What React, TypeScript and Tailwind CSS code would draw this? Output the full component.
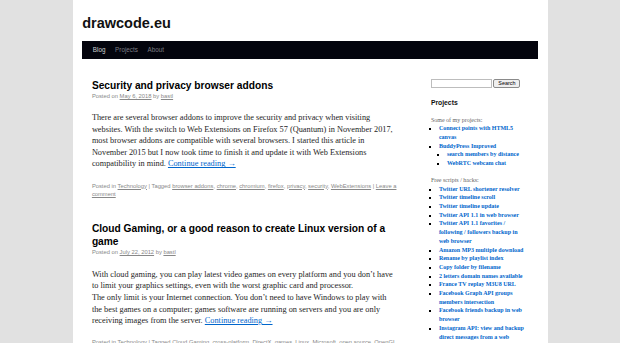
import React from "react";

const SANS = { fontFamily: "'Liberation Sans', Arial, sans-serif" };
const SERIF = { fontFamily: "'Liberation Serif', 'Times New Roman', serif" };

const NAV = [
  { label: "Blog", current: true },
  { label: "Projects", current: false },
  { label: "About", current: false },
];

interface Post {
  title: string;
  date: string;
  lines: string[];
  category: string;
  tags: string[];
  comment?: boolean;
}

// line breaks follow the original layout (Georgia in the source, narrower Times here)
const POSTS: Post[] = [
  {
    title: "Security and privacy browser addons",
    date: "May 6, 2018",
    lines: [
      "There are several browser addons to improve the security and privacy when visiting",
      "websites. With the switch to Web Extensions on Firefox 57 (Quantum) in November 2017,",
      "most browser addons are compatible with several browsers. I started this article in",
      "November 2015 but I now took time to finish it and update it with Web Extensions",
      "compatibility in mind.",
    ],
    category: "Technology",
    tags: ["browser addons", "chrome", "chromium", "firefox", "privacy", "security", "WebExtensions"],
    comment: true,
  },
  {
    title: "Cloud Gaming, or a good reason to create Linux version of a game",
    date: "July 22, 2012",
    lines: [
      "With cloud gaming, you can play latest video games on every platform and you don’t have",
      "to limit your graphics settings, even with the worst graphic card and processor.",
      "The only limit is your Internet connection. You don’t need to have Windows to play with",
      "the best games on a computer; games software are running on servers and you are only",
      "receiving images from the server.",
    ],
    category: "Technology",
    tags: ["Cloud Gaming", "cross-platform", "DirectX", "games", "Linux", "Microsoft", "open source", "OpenGL"],
  },
];

const PROJECTS = [
  { label: "Connect points with HTML5 canvas" },
  { label: "BuddyPress Improved", children: ["search members by distance", "WebRTC webcam chat"] },
];

const HACKS = [
  "Twitter URL shortener resolver",
  "Twitter timeline scroll",
  "Twitter timeline update",
  "Twitter API 1.1 in web browser",
  "Twitter API 1.1 favorites / following / followers backup in web browser",
  "Amazon MP3 multiple download",
  "Rename by playlist index",
  "Copy folder by filename",
  "2 letters domain names available",
  "France TV replay M3U8 URL",
  "Facebook Graph API groups members intersection",
  "Facebook friends backup in web browser",
  "Instagram API: view and backup direct messages from a web browser",
];

function PostEntry({ post }: { post: Post }) {
  return (
    <div className="mb-[23px]">
      <h2 className="text-[10.2px] leading-[13.2px] font-bold text-black" style={SANS}>
        {post.title}
      </h2>
      <div className="text-[5.8px] leading-[8.7px] text-[#888]" style={SANS}>
        Posted on <span className="underline">{post.date}</span> by <span className="underline">bastl</span>
      </div>
      <div className="pt-[11.6px]">
        <p className="mb-[11.6px] whitespace-nowrap text-[8.3px] leading-[11.6px] text-[#1e1e1e]" style={SERIF}>
          {post.lines.map((l, i) => (
            <React.Fragment key={i}>
              {l}
              {i < post.lines.length - 1 ? <br /> : " "}
            </React.Fragment>
          ))}
          <span className="text-[#0066cc] underline">Continue reading →</span>
        </p>
      </div>
      <div className="text-[5.8px] leading-[8.7px] text-[#888]" style={SANS}>
        Posted in <span className="underline">{post.category}</span> | Tagged{" "}
        {post.tags.map((t, i) => (
          <React.Fragment key={t}>
            <span className="underline">{t}</span>
            {i < post.tags.length - 1 ? ", " : ""}
          </React.Fragment>
        ))}
        {post.comment ? (
          <>
            {" "}| <span className="underline">Leave a comment</span>
          </>
        ) : (
          ","
        )}
      </div>
    </div>
  );
}

function Sidebar() {
  return (
    <div className="ml-[29px] w-[106px] pr-[9px]">
      {/* Search */}
      <div className="flex items-center gap-[1.5px]">
        <div className="h-[9.5px] w-[61px] border border-[#bdbdbd] bg-white" />
        <button
          className="h-[9.5px] w-[27px] rounded-[2px] border border-[#8a8a8a] bg-[#efefef] text-[5.4px] leading-none text-black"
          style={SANS}
        >
          Search
        </button>
      </div>

      <h3 className="mt-[11px] text-[6.8px] leading-[8.6px] font-bold text-[#111]" style={SANS}>
        Projects
      </h3>

      <div className="mt-[8px] text-[6px] leading-[8.7px]" style={SERIF}>
        <p className="text-[#666]">Some of my projects:</p>
        <ul className="mb-[8px] list-[square] pl-[8px] font-bold text-[#0066cc] marker:text-black">
          {PROJECTS.map(p => (
            <li key={p.label}>
              {p.label}
              {p.children && (
                <ul className="list-[square] pl-[8px]">
                  {p.children.map(c => (
                    <li key={c}>{c}</li>
                  ))}
                </ul>
              )}
            </li>
          ))}
        </ul>

        <p className="text-[#666]">Free scripts / hacks:</p>
        <ul className="list-[square] pl-[8px] font-bold text-[#0066cc] marker:text-black">
          {HACKS.map(h => (
            <li key={h}>{h}</li>
          ))}
        </ul>
      </div>
    </div>
  );
}

export default function App() {
  return (
    <div className="min-h-screen bg-[#e1e1e1]">
      <div className="mx-auto min-h-[343px] w-[475px] bg-white px-[9.7px]">
        {/* Header */}
        <div className="pt-[14.5px]">
          <h1 className="mb-[8.7px] text-[14.5px] leading-[17.4px] font-bold text-[#111]" style={SANS}>
            drawcode.eu
          </h1>
          <div className="h-[18.6px] bg-[#03040d]">
            <ul className="ml-[5.8px] flex">
              {NAV.map(n => (
                <li
                  key={n.label}
                  className={`px-[4.84px] text-[6.3px] leading-[18.6px] ${n.current ? "text-[#cfcfcf]" : "text-[#7c7c84]"}`}
                  style={SANS}
                >
                  {n.label}
                </li>
              ))}
            </ul>
          </div>
        </div>

        {/* Main */}
        <div className="flex pt-[19.4px]">
          <div className="ml-[9.7px] w-[310px] shrink-0">
            {POSTS.map(p => (
              <PostEntry key={p.title} post={p} />
            ))}
          </div>
          <Sidebar />
        </div>
      </div>
    </div>
  );
}
